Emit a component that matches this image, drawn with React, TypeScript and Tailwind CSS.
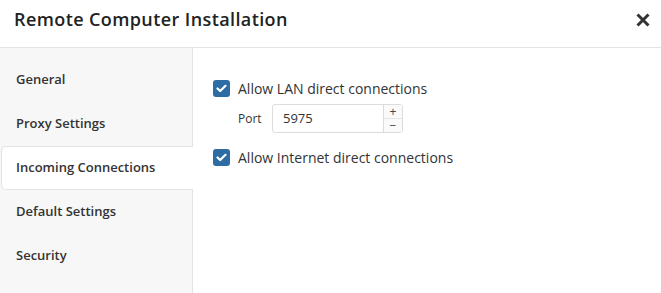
import React from "react";

function Check({ label }: { label: string }) {
  return (
    <label className="flex items-center gap-[8px] h-[20px]">
      <span className="w-[17px] h-[17px] rounded-[3px] bg-[#2e6da4] flex items-center justify-center">
        <svg width="11" height="9" viewBox="0 0 11 9">
          <path d="M1.5 4.5 L4.2 7 L9.5 1.8" stroke="#fff" strokeWidth="2.2" fill="none" strokeLinecap="round" strokeLinejoin="round" />
        </svg>
      </span>
      <span className="text-[14px] text-[#333]">{label}</span>
    </label>
  );
}

export default function App() {
  const items = ["General", "Proxy Settings", "Incoming Connections", "Default Settings", "Security"];
  return (
    <div className="w-[661px] h-[293px] bg-white overflow-hidden flex flex-col" style={{ fontFamily: '"Open Sans", sans-serif' }}>
      <div className="h-[48px] shrink-0 border-b border-[#e3e3e3] flex items-center justify-between pl-[14px] pr-[11px]">
        <div className="text-[18px] text-[#222] font-semibold tracking-[0.4px] -mt-[8px]">Remote Computer Installation</div>
        <svg width="14" height="14" viewBox="0 0 14 14" className="-mt-[8px]">
          <path d="M1.5 1.5 L12.5 12.5 M12.5 1.5 L1.5 12.5" stroke="#333" strokeWidth="3" strokeLinecap="butt" />
        </svg>
      </div>
      <div className="flex flex-1">
        <div className="w-[193px] shrink-0 bg-[#f7f7f7] border-r border-[#e3e3e3] pt-[10px] pl-[1px]">
          {items.map((it) => {
            const active = it === "Incoming Connections";
            return (
              <div
                key={it}
                className={
                  active
                    ? "h-[44px] flex items-center pl-[14px] bg-white border border-[#e3e3e3] border-r-0 rounded-l-[5px] -mr-[1px] text-[13px] font-semibold text-[#333]"
                    : "h-[44px] flex items-center pl-[15px] text-[13px] font-semibold text-[#333]"
                }
              >
                {it}
              </div>
            );
          })}
        </div>
        <div className="flex-1 pl-[20px] pt-[30px]">
          <Check label="Allow LAN direct connections" />
          <div className="flex items-center mt-[6px] ml-[25px]">
            <span className="text-[12px] text-[#333] w-[34px]">Port</span>
            <div className="w-[131px] h-[29px] border border-[#dcdcdc] rounded-[3px] flex">
              <div className="flex-1 flex items-center pl-[10px] text-[13px] text-[#333]">5975</div>
              <div className="w-[19px] border-l border-[#dcdcdc] flex flex-col bg-[#fafafa]">
                <div className="flex-1 flex items-center justify-center text-[12px] leading-none text-[#444] border-b border-[#e6e6e6]">+</div>
                <div className="flex-1 flex items-center justify-center text-[12px] leading-none text-[#444]">−</div>
              </div>
            </div>
          </div>
          <div className="mt-[14px]">
            <Check label="Allow Internet direct connections" />
          </div>
        </div>
      </div>
    </div>
  );
}
